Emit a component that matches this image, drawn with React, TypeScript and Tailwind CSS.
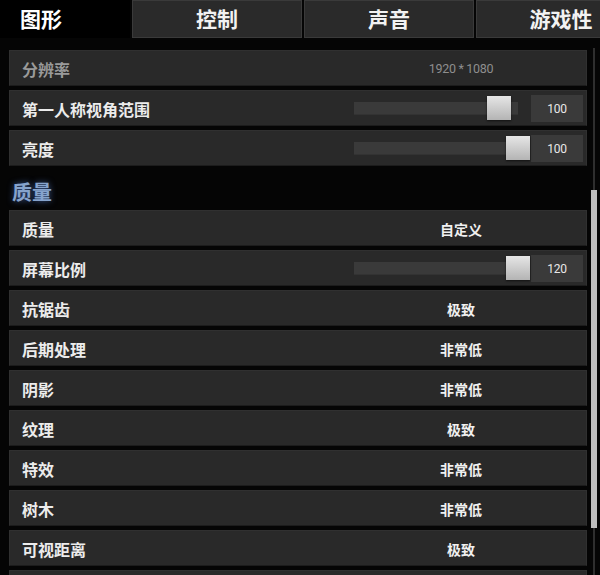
import React from 'react';

type Row =
  | { kind: 'info'; label: string; value: string }
  | { kind: 'slider'; label: string; value: string; pos: number }
  | { kind: 'select'; label: string; value: string }
  | { kind: 'header'; label: string }
  | { kind: 'blank' };

const tabs = ['图形', '控制', '声音', '游戏性'];

const rows: Row[] = [
  { kind: 'info', label: '分辨率', value: '1920 * 1080' },
  { kind: 'slider', label: '第一人称视角范围', value: '100', pos: 133 },
  { kind: 'slider', label: '亮度', value: '100', pos: 152 },
  { kind: 'header', label: '质量' },
  { kind: 'select', label: '质量', value: '自定义' },
  { kind: 'slider', label: '屏幕比例', value: '120', pos: 152 },
  { kind: 'select', label: '抗锯齿', value: '极致' },
  { kind: 'select', label: '后期处理', value: '非常低' },
  { kind: 'select', label: '阴影', value: '非常低' },
  { kind: 'select', label: '纹理', value: '极致' },
  { kind: 'select', label: '特效', value: '非常低' },
  { kind: 'select', label: '树木', value: '非常低' },
  { kind: 'select', label: '可视距离', value: '极致' },
  { kind: 'blank' },
];

const cjk = "font-['Noto_Sans_CJK_SC','Noto_Sans',sans-serif]";

function SettingRow({ row }: { row: Row }) {
  if (row.kind === 'header') {
    return (
      <div className="h-9 shrink-0 flex items-center pl-[3px] pt-[7px]">
        <span className="text-[20px] font-bold text-[#86a3cc] [text-shadow:0_0_6px_rgba(80,120,200,0.7)] leading-none">
          {row.label}
        </span>
      </div>
    );
  }

  return (
    <div className="h-9 shrink-0 flex items-center bg-[#292929] border border-[#303030] border-b-[#1c1c1c]">
      <div
        className={
          'flex-1 pl-3 pt-[2px] text-[16px] font-bold leading-none ' +
          (row.kind === 'info' ? 'text-[#9a9a9a]' : 'text-[#ececec]')
        }
      >
        {row.kind === 'blank' ? '' : row.label}
      </div>
      <div className="w-[250px] h-full flex items-center">
        {row.kind === 'info' && (
          <div className="w-full pt-[2px] text-center text-[12.5px] text-[#8e8e8e] font-['Roboto',sans-serif] tracking-tight">
            {row.value}
          </div>
        )}
        {row.kind === 'select' && (
          <div className="w-full pt-[2px] text-center text-[14px] font-bold text-[#f0f0f0] leading-none">{row.value}</div>
        )}
        {row.kind === 'slider' && (
          <div className="flex items-center pl-[18px] pt-[1px]">
            <div className="relative w-[164px] h-[13px] bg-[#3a3a3a] border-b border-[#333]">
              <div
                className="absolute top-[-6px] w-6 h-6 bg-linear-to-b from-[#e6e6e6] to-[#b4b4b4] shadow-[0_1px_2px_rgba(0,0,0,0.6)]"
                style={{ left: row.pos }}
              />
            </div>
            <div className="ml-[13px] w-[52px] h-[27px] flex items-center justify-center bg-[#3a3a3a] text-[12px] text-[#e8e8e8] font-['Roboto',sans-serif] tracking-tight">
              {row.value}
            </div>
          </div>
        )}
      </div>
    </div>
  );
}

export default function App() {
  return (
    <div className={`w-[600px] h-[575px] overflow-hidden bg-[#050505] flex flex-col ${cjk}`}>
      <div className="h-[38px] shrink-0 flex gap-[2px]">
        {tabs.map((t, i) =>
          i === 0 ? (
            <div key={t} className="w-[130px] shrink-0 flex items-center pl-5 text-[21px] font-bold text-white bg-black">
              {t}
            </div>
          ) : (
            <div
              key={t}
              className="w-[170px] shrink-0 flex items-center justify-center text-[21px] font-bold text-[#f2f2f2] bg-[#2a2a2a] border border-[#3a3a3a]"
            >
              {t}
            </div>
          )
        )}
      </div>

      <div className="flex-1 flex min-h-0">
        <div className="w-[578px] ml-[9px] mt-[12px] flex flex-col gap-1">
          {rows.map((r, i) => (
            <SettingRow key={i} row={r} />
          ))}
        </div>
        <div className="ml-[4px] w-[6px] mt-[10px] flex flex-col items-center">
          <div className="w-[2px] h-[142px] bg-[#2e2e2e]" />
          <div className="w-[6px] h-[338px] bg-[#bdbdbd]" />
          <div className="w-[2px] flex-1 bg-[#2e2e2e]" />
        </div>
      </div>
    </div>
  );
}
